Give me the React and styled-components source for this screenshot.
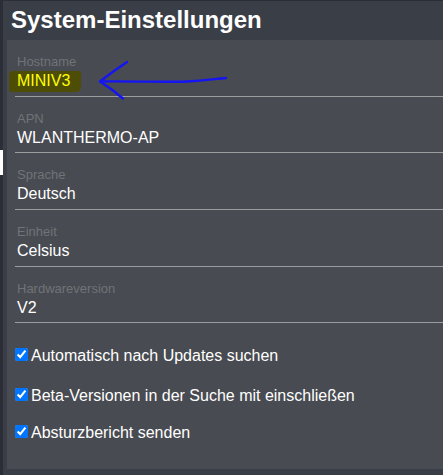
import React from "react";
import styled, { createGlobalStyle } from "styled-components";

const GlobalStyle = createGlobalStyle`
  html, body {
    margin: 0;
    padding: 0;
    background: #3a3e47;
    overflow: hidden;
  }
  body {
    font-family: "Liberation Sans", Arial, sans-serif;
  }
`;

const Layout = styled.div`
  display: flex;
  height: 475px;
  border-top: 1px solid #2b2e36;
  box-sizing: border-box;
`;

const Sidebar = styled.aside`
  width: 3px;
  flex: 0 0 3px;
  background: #2b2e36;
  display: flex;
  flex-direction: column;
`;

const ActiveMarker = styled.div`
  margin-top: 149px;
  height: 25px;
  background: #ffffff;
`;

const Main = styled.main`
  flex: 1;
  min-width: 0;
  padding-left: 4px;
  display: flex;
  flex-direction: column;
`;

const Title = styled.h1`
  margin: 0;
  padding: 0 0 2px 4px;
  font-size: 24px;
  line-height: 37px;
  font-weight: 700;
  color: #ffffff;
`;

const Panel = styled.section`
  position: relative;
  background: #484b51;
  padding: 0 0 26.5px 8px;
  margin-bottom: 5px;
`;

const Field = styled.div`
  padding: 14px 0 4.7px;
  border-bottom: 1px solid #9c9d9f;
`;

const Label = styled.div`
  padding-left: 2px;
  font-size: 13px;
  line-height: 16px;
  color: #707378;
`;

const Value = styled.div`
  padding-left: 2px;
  margin-top: 1px;
  font-size: 16px;
  line-height: 20px;
  color: ${(p) => (p.$highlight ? "#ffff00" : "#ffffff")};
`;

const Highlight = styled.span`
  margin-left: -8px;
  padding: 1px 11px 3px 8px;
  background: #4e4d06;
  border-radius: 4px 2px 5px 3px;
`;

const CheckRow = styled.label`
  display: block;
  margin-top: ${(p) => p.$gap}px;
  font-size: 16px;
  line-height: 20px;
  color: #ffffff;
`;

const Check = styled.input`
  width: 13px;
  height: 13px;
  margin: 0 3px 0 0;
  vertical-align: baseline;
  accent-color: #0075ff;
`;

const Arrow = styled.svg`
  position: absolute;
  left: 90px;
  top: 18px;
  width: 140px;
  height: 45px;
  overflow: visible;
  pointer-events: none;
`;

const fields = [
  { label: "Hostname", value: "MINIV3", highlight: true },
  { label: "APN", value: "WLANTHERMO-AP" },
  { label: "Sprache", value: "Deutsch" },
  { label: "Einheit", value: "Celsius" },
  { label: "Hardwareversion", value: "V2" },
];

const checks = [
  { text: "Automatisch nach Updates suchen", gap: 23 },
  { text: "Beta-Versionen in der Suche mit einschließen", gap: 20 },
  { text: "Absturzbericht senden", gap: 16.5 },
];

export default function App() {
  return (
    <>
      <GlobalStyle />
      <Layout>
        <Sidebar>
          <ActiveMarker />
        </Sidebar>
        <Main>
          <Title>System-Einstellungen</Title>
          <Panel>
            {fields.map((f) => (
              <Field key={f.label}>
                <Label>{f.label}</Label>
                <Value $highlight={f.highlight}>
                  {f.highlight ? <Highlight>{f.value}</Highlight> : f.value}
                </Value>
              </Field>
            ))}
            {checks.map((c) => (
              <CheckRow key={c.text} $gap={c.gap}>
                <Check type="checkbox" defaultChecked />
                {c.text}
              </CheckRow>
            ))}
            <Arrow viewBox="0 0 140 45">
              <path
                d="M30 4 Q15 14 3 23.5 Q15 31 26 40.5 M3 23.5 C40 23 70 24.5 90 23.5 S120 20.5 129 20"
                fill="none"
                stroke="#1414f5"
                strokeWidth="2.4"
                strokeLinecap="round"
                strokeLinejoin="round"
              />
            </Arrow>
          </Panel>
        </Main>
      </Layout>
    </>
  );
}
